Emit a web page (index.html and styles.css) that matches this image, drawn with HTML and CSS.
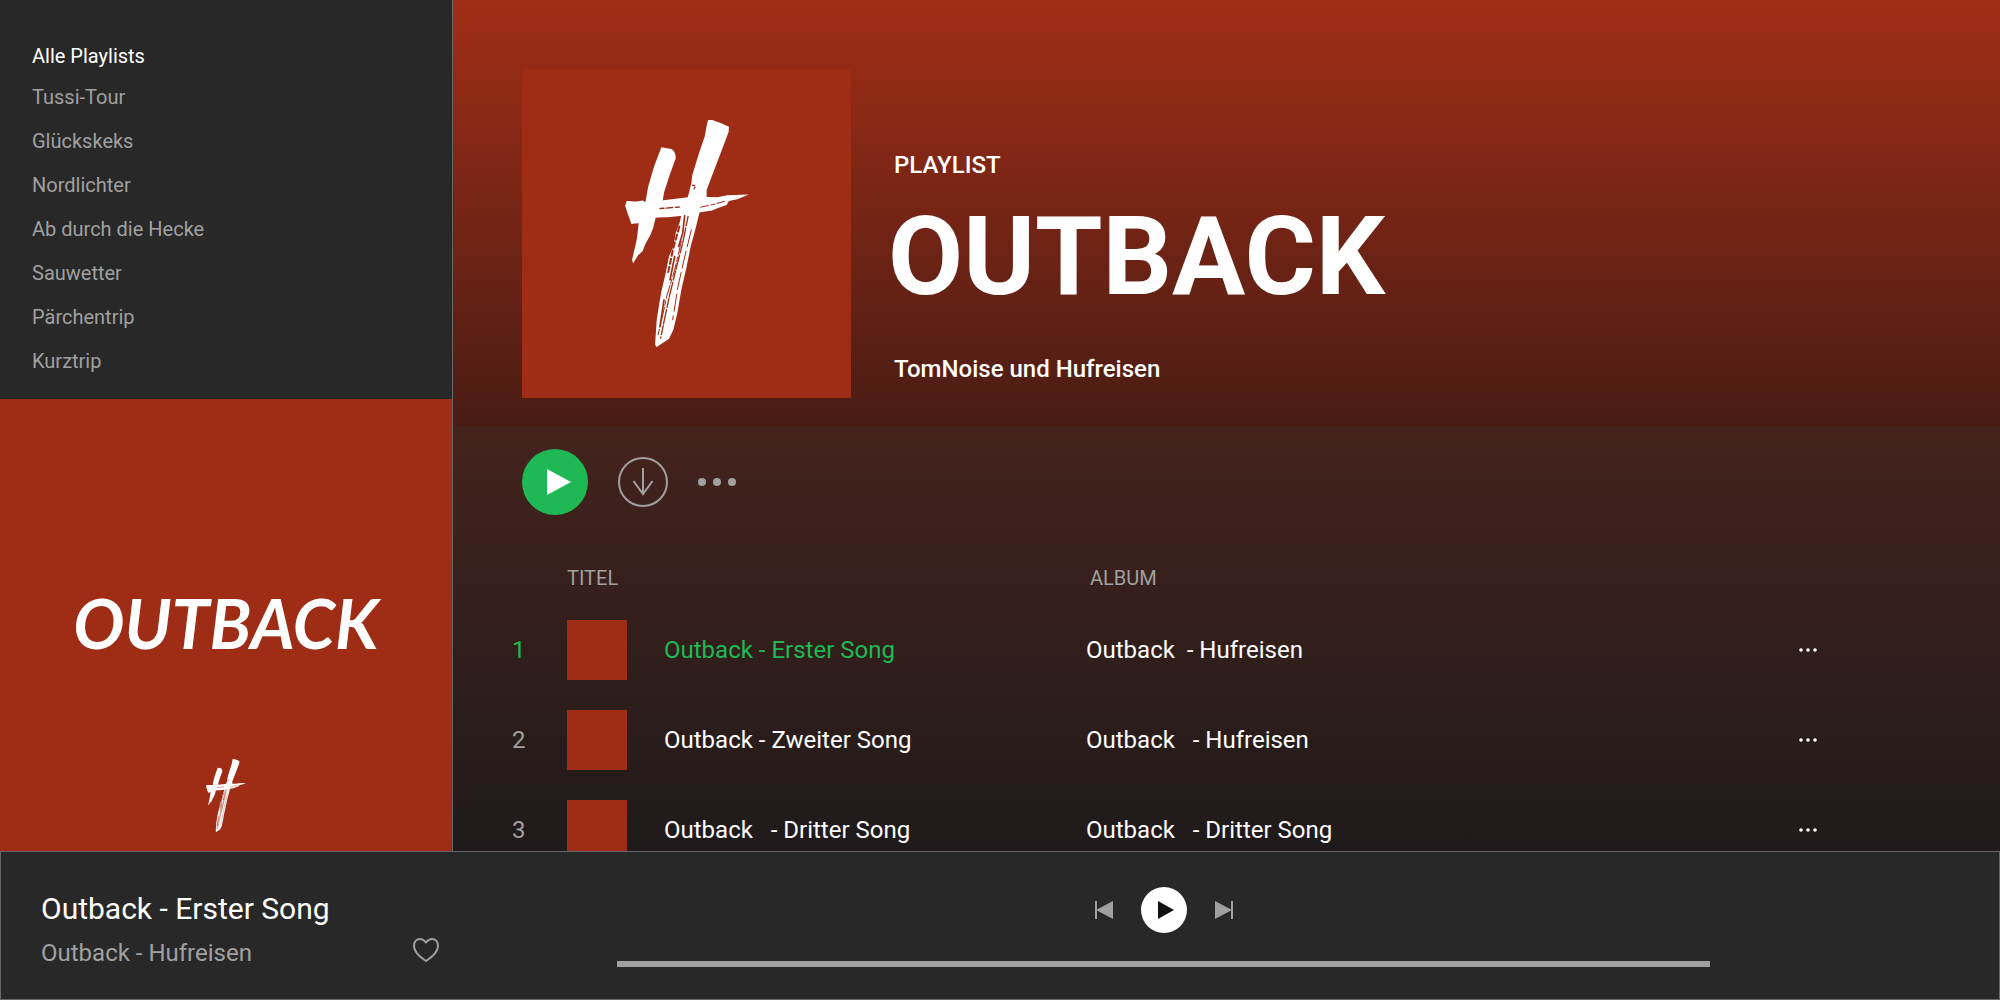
FILE: index.html
```html
<!DOCTYPE html>
<html lang="de">
<head>
  <meta charset="UTF-8">
  <meta name="viewport" content="width=device-width, initial-scale=1">
  <title>Outback - Playlist</title>
  <link rel="stylesheet" href="styles.css">
</head>
<body>

<!-- Brush mark, used by both covers -->
<svg class="sprite" aria-hidden="true">
  <symbol id="mark" viewBox="73 60 372 682">
    <g fill="#fff">
      <path d="M182 142 L212 147 Q226 156 225 176 L208 222 L190 278 L186 303 L188 350 L165 353 L157 385 L148 408 L135 430 L125 455 L112 466 L97 491 L94 480 L108 420 L114 370 L92 372 L82 345 L73 318 L78 303 L134 308 L142 262 L160 200 Z"/>
      <path d="M78 303 L100 306 L126 302 L136 308 L188 301 L262 292 L320 291 L350 292 L380 286 L445 284 L410 298 L385 303 L378 315 L350 325 L335 332 L295 338 L262 346 L200 352 L165 353 L92 372 Z"/>
      <path d="M322 60 L335 60 L362 70 L385 80 L384 96 L360 160 L335 225 L318 270 L318 292 L298 332 L285 385 L270 440 L258 500 L242 570 L230 640 L218 690 L205 717 L168 742 L163 735 L168 660 L176 610 L182 575 L195 520 L205 470 L218 440 L225 400 L238 365 L242 345 L262 290 L272 250 L275 225 L295 160 L312 110 L318 78 Z"/>
    </g>
    <g fill="none" stroke="#9f2c15" stroke-linecap="round">
      <path stroke-width="5" d="M252 348 L246 400 L234 440 M222 470 L208 540 M190 600 L178 680"/>
      <path stroke-width="4" stroke-dasharray="28 7 44 5" d="M262 350 L246 430 L228 500 L206 590 L190 665 L180 715"/>
      <path stroke-width="3" stroke-dasharray="40 8 14 6" d="M242 425 L222 510 L198 590 L182 665 L172 705"/>
      <path stroke-width="3" stroke-dasharray="52 14" d="M272 390 L250 480 L232 560 L216 660"/>
      <path stroke-width="6" stroke-dasharray="16 9" d="M236 380 L217 448 L202 520"/>
      <path stroke-width="4" stroke-dasharray="12 6 20 8" d="M178 326 L240 321"/>
      <path stroke-width="3" stroke-dasharray="24 8 12 6" d="M300 322 L345 312 L372 304"/>
      <path stroke-width="4" stroke-dasharray="6 9" d="M276 256 L286 258 L276 272"/>
    </g>
  </symbol>
</svg>

<div class="app">
  <aside class="sidebar">
    <nav class="playlists">
      <a href="#" class="playlists-all">Alle Playlists</a>
      <ul>
        <li><a href="#">Tussi-Tour</a></li>
        <li><a href="#">Glückskeks</a></li>
        <li><a href="#">Nordlichter</a></li>
        <li><a href="#">Ab durch die Hecke</a></li>
        <li><a href="#">Sauwetter</a></li>
        <li><a href="#">Pärchentrip</a></li>
        <li><a href="#">Kurztrip</a></li>
      </ul>
    </nav>
    <div class="sidebar-cover">
      <span class="wordmark">OUTBACK</span>
      <svg class="mark-small" aria-hidden="true"><use href="#mark"/></svg>
    </div>
  </aside>

  <main class="main">
    <header class="hero">
      <div class="hero-cover">
        <svg class="mark-large" role="img" aria-label="Hufreisen"><use href="#mark"/></svg>
      </div>
      <div class="hero-text">
        <p class="hero-type">PLAYLIST</p>
        <h1>OUTBACK</h1>
        <p class="hero-artist">TomNoise und Hufreisen</p>
      </div>
    </header>

    <section class="content">
      <div class="actions">
        <button type="button" aria-label="Abspielen">
          <svg width="66" height="66" viewBox="0 0 66 66"><circle cx="33" cy="33" r="33" fill="#1eb954"/><path d="M25 20v26l24-13z" fill="#fff"/></svg>
        </button>
        <button type="button" aria-label="Herunterladen">
          <svg width="50" height="50" viewBox="0 0 50 50" fill="none" stroke="#a0a0a0" stroke-width="2"><circle cx="25" cy="25" r="24"/><path d="M25 11v26M15.500 24 25 37l9.500-13"/></svg>
        </button>
        <button type="button" aria-label="Mehr">
          <svg width="40" height="8" viewBox="0 0 40 8" fill="#a0a0a0"><circle cx="4" cy="4" r="4"/><circle cx="19" cy="4" r="4"/><circle cx="34" cy="4" r="4"/></svg>
        </button>
      </div>

      <table class="tracks">
        <colgroup>
          <col class="col-number">
          <col class="col-thumb">
          <col class="col-title">
          <col>
          <col class="col-more">
        </colgroup>
        <thead>
          <tr>
            <th></th>
            <th colspan="2">TITEL</th>
            <th class="th-album">ALBUM</th>
            <th></th>
          </tr>
        </thead>
        <tbody>
          <tr class="active">
            <td class="number">1</td>
            <td><div class="thumb"></div></td>
            <td class="title">Outback - Erster Song</td>
            <td>Outback&nbsp; - Hufreisen</td>
            <td><button type="button" aria-label="Optionen"><svg width="18" height="4" viewBox="0 0 18 4" fill="#fff"><circle cx="2" cy="2" r="1.800"/><circle cx="9" cy="2" r="1.800"/><circle cx="16" cy="2" r="1.800"/></svg></button></td>
          </tr>
          <tr>
            <td class="number">2</td>
            <td><div class="thumb"></div></td>
            <td class="title">Outback - Zweiter Song</td>
            <td>Outback&nbsp;&nbsp; - Hufreisen</td>
            <td><button type="button" aria-label="Optionen"><svg width="18" height="4" viewBox="0 0 18 4" fill="#fff"><circle cx="2" cy="2" r="1.800"/><circle cx="9" cy="2" r="1.800"/><circle cx="16" cy="2" r="1.800"/></svg></button></td>
          </tr>
          <tr>
            <td class="number">3</td>
            <td><div class="thumb"></div></td>
            <td class="title">Outback&nbsp;&nbsp; - Dritter Song</td>
            <td>Outback&nbsp;&nbsp; - Dritter Song</td>
            <td><button type="button" aria-label="Optionen"><svg width="18" height="4" viewBox="0 0 18 4" fill="#fff"><circle cx="2" cy="2" r="1.800"/><circle cx="9" cy="2" r="1.800"/><circle cx="16" cy="2" r="1.800"/></svg></button></td>
          </tr>
        </tbody>
      </table>
    </section>
  </main>

  <footer class="player">
    <div class="now">
      <div class="now-text">
        <div class="now-title">Outback - Erster Song</div>
        <div class="now-artist">Outback - Hufreisen</div>
      </div>
      <button type="button" aria-label="Gefällt mir">
        <svg width="26" height="24" viewBox="0 0 26 24" fill="none" stroke="#a0a0a0" stroke-width="2"><path d="M13 4.500C11 2 9 1 7 1 3.500 1 1 4 1 8c0 6 5 10.500 12 15 7-4.500 12-9 12-15 0-4-2.500-7-6-7-2 0-4 1-6 3.500z"/></svg>
      </button>
    </div>
    <div class="transport">
      <div class="controls">
        <button type="button" aria-label="Zurück">
          <svg width="18" height="18" viewBox="0 0 18 18" fill="#a0a0a0"><path d="M0 0h2v8.500L18 0v18L2 9.500V18H0z"/></svg>
        </button>
        <button type="button" aria-label="Abspielen">
          <svg width="46" height="46" viewBox="0 0 46 46"><circle cx="23" cy="23" r="23" fill="#fff"/><path d="M17 14v18l16-9z" fill="#111"/></svg>
        </button>
        <button type="button" aria-label="Weiter">
          <svg width="18" height="18" viewBox="0 0 18 18" fill="#a0a0a0"><path d="M18 0h-2v8.500L0 0v18l16-8.500V18h2z"/></svg>
        </button>
      </div>
      <input type="range" class="seek" min="0" max="100" value="0" aria-label="Position">
    </div>
  </footer>
</div>

</body>
</html>
```
FILE: styles.css
```css
* {
  box-sizing: border-box;
}

body {
  margin: 0;
  background: #282828;
  color: #fff;
  font-family: Roboto, "Liberation Sans", sans-serif;
  font-size: 24px;
  line-height: 32px;
}

a {
  color: inherit;
  text-decoration: none;
}

button {
  display: block;
  padding: 0;
  border: 0;
  background: none;
  cursor: pointer;
}

svg {
  display: block;
}

ul,
p,
h1 {
  margin: 0;
  padding: 0;
  list-style: none;
}

.sprite {
  position: absolute;
  width: 0;
  height: 0;
}

.app {
  display: grid;
  grid-template-columns: 453px minmax(0, 1fr);
  grid-template-rows: minmax(0, 1fr) auto;
  height: 100vh;
}

/* Sidebar */
.sidebar {
  display: flex;
  flex-direction: column;
  overflow: hidden;
  border-right: 1px solid #666;
  background: #282828;
}

.playlists {
  flex: 1;
  padding: 40px 32px 0;
  color: #a0a0a0;
  font-size: 20px;
}

.playlists-all {
  display: block;
  margin-bottom: 3px;
  color: #fff;
}

.playlists li {
  line-height: 44px;
}

.sidebar-cover {
  display: flex;
  flex-direction: column;
  align-items: center;
  justify-content: flex-end;
  gap: 96px;
  aspect-ratio: 1;
  padding-bottom: 19px;
  background: #9f2c15;
}

.wordmark {
  font-family: Lato, sans-serif;
  font-size: 68px;
  font-style: italic;
  font-weight: 700;
  line-height: 80px;
}

.mark-small {
  width: 40px;
  height: 73px;
}

/* Playlist */
.main {
  overflow-y: auto;
  scrollbar-width: none;
  background: #1f1a1b;
}

.hero {
  display: flex;
  gap: 43px;
  padding: 69px 69px 28px;
  background: linear-gradient(#a02d16 2%, #491c14);
}

.hero-cover {
  display: grid;
  flex: none;
  place-items: center;
  width: 329px;
  height: 329px;
  background: #9f2c15;
}

.mark-large {
  width: 124px;
  height: 227px;
}

.hero-text {
  padding-top: 80px;
  font-weight: 500;
}

h1 {
  margin: 12px 0 32px -6px;
  font-size: 109px;
  font-weight: 700;
  line-height: 128px;
}

.content {
  padding: 23px 0 0 59px;
  background: linear-gradient(#45231c, #1f1a1b 424px);
}

.actions {
  display: flex;
  align-items: center;
  gap: 30px;
  padding-left: 10px;
}

.tracks {
  width: 100%;
  margin-top: 36px;
  border-collapse: collapse;
  table-layout: fixed;
}

.tracks th {
  height: 54px;
  padding: 0;
  color: #a0a0a0;
  font-size: 20px;
  font-weight: 400;
  text-align: left;
}

.tracks .th-album {
  padding-left: 4px;
}

.tracks td {
  height: 90px;
  padding: 0;
  white-space: nowrap;
}

.col-number {
  width: 55px;
}

.col-thumb {
  width: 97px;
}

.col-title {
  width: 422px;
}

.col-more {
  width: 201px;
}

.number {
  color: #a0a0a0;
}

.active .number,
.active .title {
  color: #1eb954;
}

.thumb {
  width: 60px;
  height: 60px;
  background: #9f2c15;
}

/* Player */
.player {
  display: grid;
  grid-column: 1 / -1;
  grid-template-columns: 576px minmax(0, 1fr);
  height: 149px;
  padding: 0 289px 0 40px;
  border: 1px solid #666;
  background: #282828;
}

.now {
  display: flex;
  align-items: flex-end;
  justify-content: space-between;
  width: 398px;
  padding-bottom: 37px;
}

.now-text {
  margin-bottom: -11px;
}

.now-title {
  font-size: 30px;
  line-height: 48px;
}

.now-artist {
  line-height: 40px;
  color: #a0a0a0;
}

.transport {
  padding-top: 35px;
}

.controls {
  display: flex;
  align-items: center;
  justify-content: center;
  gap: 28px;
}

.seek {
  display: block;
  width: 100%;
  height: 6px;
  margin: 28px 0 0;
  appearance: none;
  background: #a0a0a0;
}

.seek::-webkit-slider-thumb {
  width: 0;
  height: 0;
  appearance: none;
}
```
